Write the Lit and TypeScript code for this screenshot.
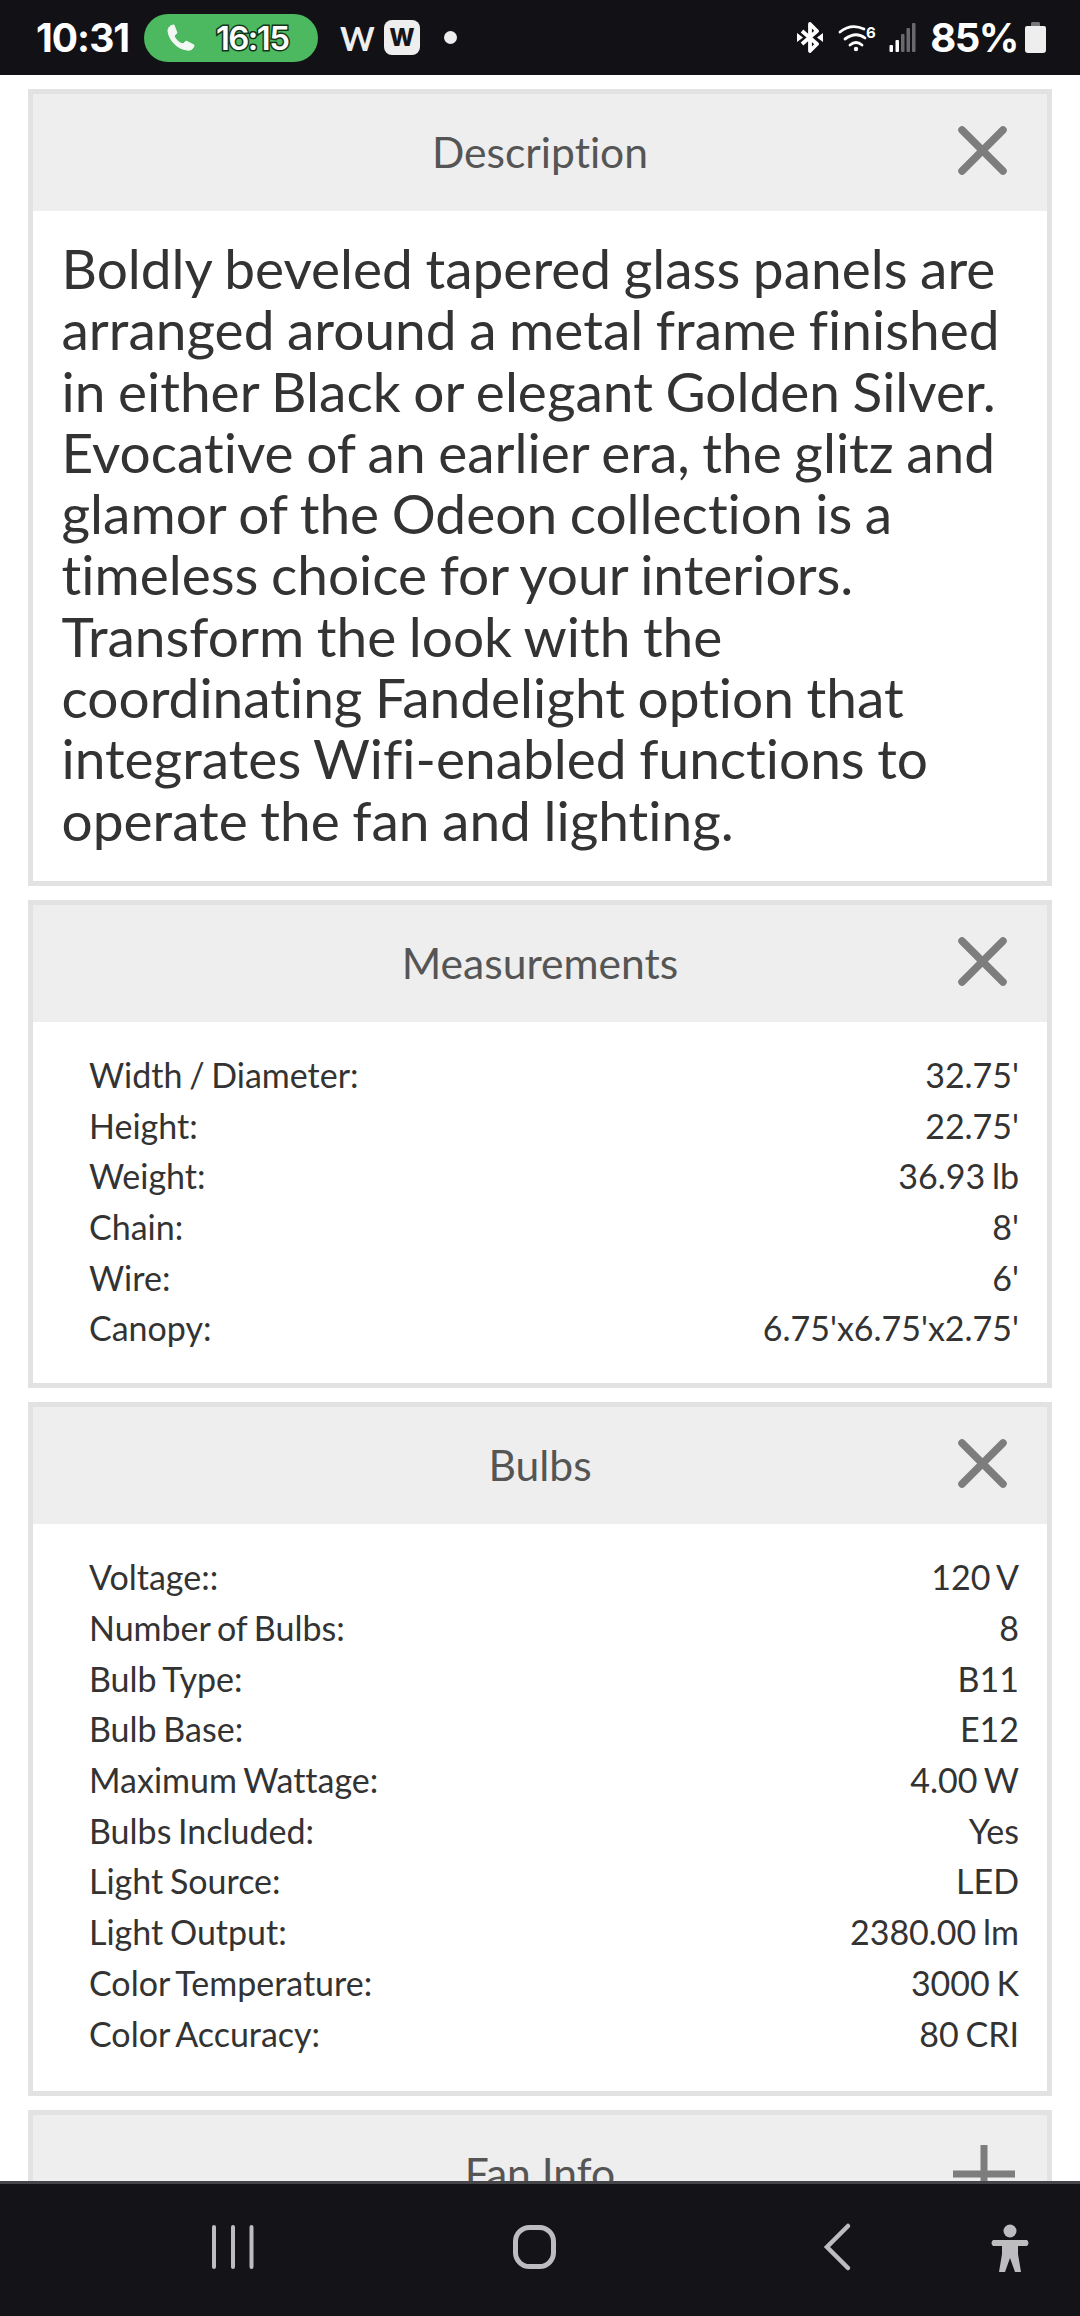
import { LitElement, html, css, svg } from 'lit';
import { customElement } from 'lit/decorators.js';

type Row = [string, string];

const MEASUREMENTS: Row[] = [
  ['Width / Diameter:', "32.75'"],
  ['Height:', "22.75'"],
  ['Weight:', '36.93 lb'],
  ['Chain:', "8'"],
  ['Wire:', "6'"],
  ['Canopy:', "6.75'x6.75'x2.75'"]
];

const BULBS: Row[] = [
  ['Voltage::', '120 V'],
  ['Number of Bulbs:', '8'],
  ['Bulb Type:', 'B11'],
  ['Bulb Base:', 'E12'],
  ['Maximum Wattage:', '4.00 W'],
  ['Bulbs Included:', 'Yes'],
  ['Light Source:', 'LED'],
  ['Light Output:', '2380.00 lm'],
  ['Color Temperature:', '3000 K'],
  ['Color Accuracy:', '80 CRI']
];

const closeIcon = svg`<path d="M5 5 L46 46 M46 5 L5 46" stroke="#7d7d7d" stroke-width="7.500" stroke-linecap="round" fill="none"/>`;
const plusIcon = svg`<path d="M27 -1 V60 M-4 28 H58" stroke="#7d7d7d" stroke-width="7" fill="none"/>`;

@customElement('app-root')
export class AppRoot extends LitElement {
  static styles = css`
    :host {
      display: flex;
      flex-direction: column;
      width: 1080px;
      height: 2316px;
      overflow: hidden;
      background: #fff;
      font-family: Lato, 'Noto Sans', sans-serif;
      font-variant-ligatures: none;
    }
    .status {
      flex: none;
      height: 75px;
      background: #121216;
      color: #fff;
      display: flex;
      align-items: center;
      padding: 0 34px 0 36px;
      box-sizing: border-box;
      font-family: Inter, Roboto, sans-serif;
    }
    .time {
      width: 95px;
      white-space: nowrap;
      font-size: 39px;
      font-weight: 700;
      letter-spacing: -1px;
    }
    .call {
      margin-left: 13px;
      width: 174px;
      height: 48px;
      border-radius: 24px;
      background: #4cb85f;
      display: flex;
      align-items: center;
      padding-left: 23px;
      box-sizing: border-box;
    }
    .call span {
      margin-left: 21px;
      font-size: 33px;
      font-weight: 600;
      letter-spacing: -1.6px;
      color: #fff;
      -webkit-text-stroke: 3px #12351a;
      paint-order: stroke fill;
    }
    .w {
      margin-left: 22px;
      width: 31px;
      font-family: Lato, sans-serif;
      font-size: 33px;
      font-weight: 700;
      color: #eee;
    }
    .wbox {
      margin-left: 13px;
      width: 36px;
      height: 35px;
      border-radius: 8px;
      background: #eee;
      color: #15151a;
      font-size: 24px;
      font-weight: 800;
      display: flex;
      align-items: center;
      justify-content: center;
    }
    .dot {
      margin-left: 24px;
      width: 13px;
      height: 13px;
      border-radius: 50%;
      background: #eee;
    }
    .status-right {
      margin-left: auto;
      display: flex;
      align-items: center;
    }
    .status-right svg { display: block; }
    .wifi { margin-left: 15px; overflow: visible; }
    .signal { margin-left: 13px; }
    .battery { margin-left: 7px; }
    .pct {
      margin-left: 14px;
      font-size: 40px;
      font-weight: 700;
      letter-spacing: -1.5px;
    }
    .page {
      flex: 1;
      min-height: 0;
      overflow: hidden;
      padding: 14px 28px 0;
      display: flex;
      flex-direction: column;
      gap: 14px;
    }
    .panel {
      flex: none;
      border: 5px solid #e2e2e2;
    }
    .head {
      height: 117px;
      background: #eeeeee;
      display: flex;
      align-items: center;
      justify-content: center;
      position: relative;
      color: #555;
      font-size: 42.600px;
      padding-bottom: 2px;
      box-sizing: border-box;
    }
    .head svg {
      position: absolute;
      right: 39px;
      top: 31px;
      width: 51px;
      height: 51px;
      overflow: visible;
    }
    .desc {
      padding: 27px 27px 30px 28.500px;
      font-size: 55px;
      line-height: 61.300px;
      word-spacing: -1.500px;
      color: #333;
    }
    .rows {
      padding: 28px 28px 29px 56px;
      color: #333;
      font-size: 34px;
      line-height: 50.700px;
      word-spacing: -2px;
    }
    .rows.long { padding-bottom: 32px; }
    .row { display: flex; justify-content: space-between; }
    .nav {
      flex: none;
      height: 135px;
      background: #131318;
      border-top: 3px solid #45454a;
      position: relative;
      box-sizing: border-box;
    }
    .nav svg {
      position: absolute;
      left: 0;
      top: 0;
      width: 1080px;
      height: 132px;
    }
  `;

  renderPanel(title: string, body: unknown, icon = closeIcon) {
    return html`
      <section class="panel">
        <div class="head">${title}<svg viewBox="0 0 51 51">${icon}</svg></div>
        ${body}
      </section>
    `;
  }

  renderRows(rows: Row[], long = false) {
    return html`
      <div class="rows ${long ? 'long' : ''}">
        ${rows.map(([name, value]) => html`<div class="row"><span>${name}</span><span>${value}</span></div>`)}
      </div>
    `;
  }

  render() {
    return html`
      <div class="status">
        <span class="time">10:31</span>
        <div class="call">
          <svg width="28" height="27" viewBox="0 0 28 27">
            <path d="M7 1 L10 9 L7 12 C9 16 12 19 16 20 L19 17 L27 21 C27 24 24 27 20 26 C10 25 2 16 1 7 C1 4 3 1 7 1 Z" fill="#f4f8f4" stroke="#f4f8f4" stroke-linejoin="round"/>
          </svg>
          <span>16:15</span>
        </div>
        <span class="w">W</span>
        <div class="wbox">W</div>
        <div class="dot"></div>
        <div class="status-right">
          <svg width="26" height="31" viewBox="0 0 26 31">
            <path d="M5 9 L20 22 L13 29 V2 L20 9 L5 22" stroke="#fff" stroke-width="3.800" fill="none" stroke-linejoin="round"/>
            <path d="M0 11 L6 15.500 L0 20 Z M26 11 L20 15.500 L26 20 Z" fill="#fff"/>
          </svg>
          <svg class="wifi" width="38" height="26" viewBox="0 0 38 26">
            <path d="M2 7 Q13 -2 26 4 M7 14 Q18 6 27 13 M12 20 Q18 15 24 20" stroke="#fff" stroke-width="2.800" fill="none" stroke-linecap="round"/>
            <circle cx="18" cy="24" r="2.200" fill="#fff"/>
            <text x="28" y="13" fill="#fff" font-size="15" font-weight="700" font-family="Inter">6</text>
          </svg>
          <svg class="signal" width="27" height="31" viewBox="0 0 27 31">
            <rect x="0.500" y="23" width="3.500" height="7" rx="1" fill="#fff"/>
            <rect x="6.500" y="18" width="3.500" height="12" rx="1" fill="#fff"/>
            <rect x="12" y="12" width="3.500" height="18" rx="1" fill="#6a6a6e"/>
            <rect x="17.500" y="6" width="3.500" height="24" rx="1" fill="#6a6a6e"/>
            <rect x="23" y="1" width="3.500" height="29" rx="1" fill="#6a6a6e"/>
          </svg>
          <span class="pct">85%</span>
          <svg class="battery" width="21" height="31" viewBox="0 0 21 31">
            <path d="M7 0 H14 Q15 0 15 2 V4 H6 V2 Q6 0 7 0 Z" fill="#77777a"/>
            <path d="M2 4 H19 Q21 4 21 6 V28 Q21 31 18 31 H3 Q0 31 0 28 V6 Q0 4 2 4 Z" fill="#eeeeee"/>
          </svg>
        </div>
      </div>
      <div class="page">
        ${this.renderPanel('Description', html`
          <div class="desc">Boldly beveled tapered glass panels are arranged around a metal frame finished in either Black or elegant Golden Silver. Evocative of an earlier era, the glitz and glamor of the Odeon collection is a timeless choice for your interiors. Transform the look with the coordinating Fandelight option that integrates Wifi-enabled functions to operate the fan and lighting.</div>
        `)}
        ${this.renderPanel('Measurements', this.renderRows(MEASUREMENTS))}
        ${this.renderPanel('Bulbs', this.renderRows(BULBS, true))}
        ${this.renderPanel('Fan Info', html``, plusIcon)}
      </div>
      <div class="nav">
        <svg viewBox="0 0 1080 132">
          <g stroke="#bdbdc0" fill="none" stroke-linecap="round">
            <path d="M214 43 V83 M233 43 V83 M251.500 43 V83" stroke-width="4"/>
            <rect x="515.500" y="43.500" width="38" height="39" rx="14" stroke-width="5"/>
            <path d="M848 42 L827 63 L848 84" stroke-width="4.500"/>
          </g>
          <g fill="#bdbdc0">
            <circle cx="1010" cy="47" r="6.500"/>
            <path d="M993 56 H1027 Q1030 59 1027 62 L1018 62 L1018 70 L1021 88 L1015 88 L1010 74 L1005 88 L999 88 L1002 70 L1002 62 L993 62 Q990 59 993 56 Z"/>
          </g>
        </svg>
      </div>
    `;
  }
}
